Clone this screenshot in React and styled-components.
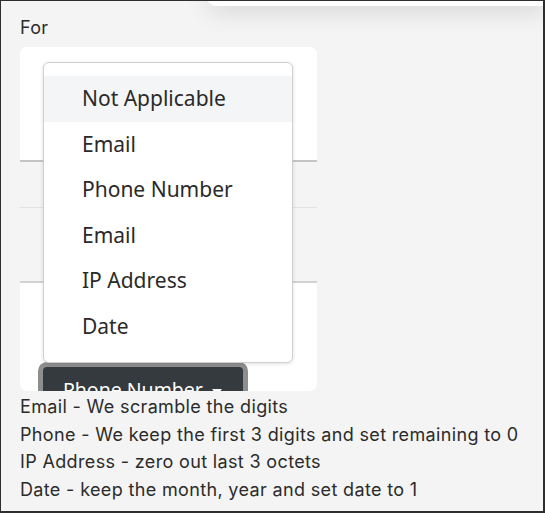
import React from "react";
import styled, { createGlobalStyle } from "styled-components";

const GlobalStyle = createGlobalStyle`
  html, body {
    margin: 0;
    padding: 0;
    background: #f4f4f4;
  }
  * { box-sizing: border-box; }
`;

const Frame = styled.div`
  position: relative;
  width: 545px;
  height: 513px;
  overflow: hidden;
  background: #f4f4f4;
  border-style: solid;
  border-color: #2e2e2e;
  border-width: 1px 2px 2px 1px;
  padding: 13px 0 0 19px;
  font-family: Inter, "Liberation Sans", Arial, sans-serif;
  color: #2b2b2b;
`;

const TopSheet = styled.div`
  position: absolute;
  top: -10px;
  left: 206px;
  right: -4px;
  height: 15px;
  background: #fff;
  border-radius: 0 0 0 9px;
  box-shadow: 0 4px 24px rgba(0, 0, 0, 0.16);
`;

const Label = styled.div`
  font-size: 18px;
  line-height: 27px;
  letter-spacing: 0.3px;
`;

const Card = styled.div`
  position: relative;
  margin-top: 6px;
  width: 297px;
  height: 344px;
  background: #fff;
  border-radius: 7px;
  overflow: hidden;
  display: flex;
  flex-direction: column;
`;

const Row = styled.div`
  height: ${(p) => p.$h}px;
  background: ${(p) => (p.$shade ? "#f4f4f4" : "#fff")};
  border-bottom: ${(p) => p.$line || "none"};
  flex-shrink: 0;
`;

const Foot = styled.div`
  flex: 1;
  padding: 84px 0 0 23px;
`;

const DarkButton = styled.button`
  display: flex;
  align-items: flex-start;
  gap: 9px;
  width: 200px;
  height: 40px;
  padding: 9px 0 0 20px;
  border: none;
  border-radius: 4px;
  background: #353a3f;
  color: #fff;
  font-family: "Noto Sans", sans-serif;
  font-size: 19.5px;
  box-shadow: 0 0 0 5px #8e8e8e;
`;

const Caret = styled.span`
  margin-top: 13px;
  width: 0;
  height: 0;
  border-left: 5px solid transparent;
  border-right: 5px solid transparent;
  border-top: 6px solid #fff;
`;

const Menu = styled.ul`
  position: absolute;
  top: 15px;
  left: 23px;
  width: 250px;
  margin: 0;
  padding: 13px 0;
  list-style: none;
  background: #fff;
  border: 1px solid #cfcfcf;
  border-radius: 6px;
  box-shadow: 0 1px 4px rgba(0, 0, 0, 0.12);
`;

const Item = styled.li`
  height: 45.5px;
  line-height: 45.5px;
  padding-left: 38px;
  font-family: "Noto Sans", sans-serif;
  font-size: 21px;
  color: #2a2a2a;
  background: ${(p) => (p.$active ? "#f4f5f7" : "transparent")};
`;

const Notes = styled.div`
  margin-top: 2px;
  font-size: 18px;
  line-height: 27.5px;
  letter-spacing: 0.35px;
`;

const options = ["Not Applicable", "Email", "Phone Number", "Email", "IP Address", "Date"];

const notes = [
  "Email - We scramble the digits",
  "Phone - We keep the first 3 digits and set remaining to 0",
  "IP Address - zero out last 3 octets",
  "Date - keep the month, year and set date to 1",
];

export default function App() {
  return (
    <>
      <GlobalStyle />
      <Frame>
        <TopSheet />
        <Label>For</Label>
        <Card>
          <Row $h={115} $line="2px solid #c4c4c4" />
          <Row $h={46} $shade $line="1px solid #e2e2e2" />
          <Row $h={75} $shade $line="2px solid #d2d2d2" />
          <Foot>
            <DarkButton>
              Phone Number
              <Caret />
            </DarkButton>
          </Foot>
          <Menu>
            {options.map((o, i) => (
              <Item key={i} $active={i === 0}>
                {o}
              </Item>
            ))}
          </Menu>
        </Card>
        <Notes>
          {notes.map((n) => (
            <div key={n}>{n}</div>
          ))}
        </Notes>
      </Frame>
    </>
  );
}
